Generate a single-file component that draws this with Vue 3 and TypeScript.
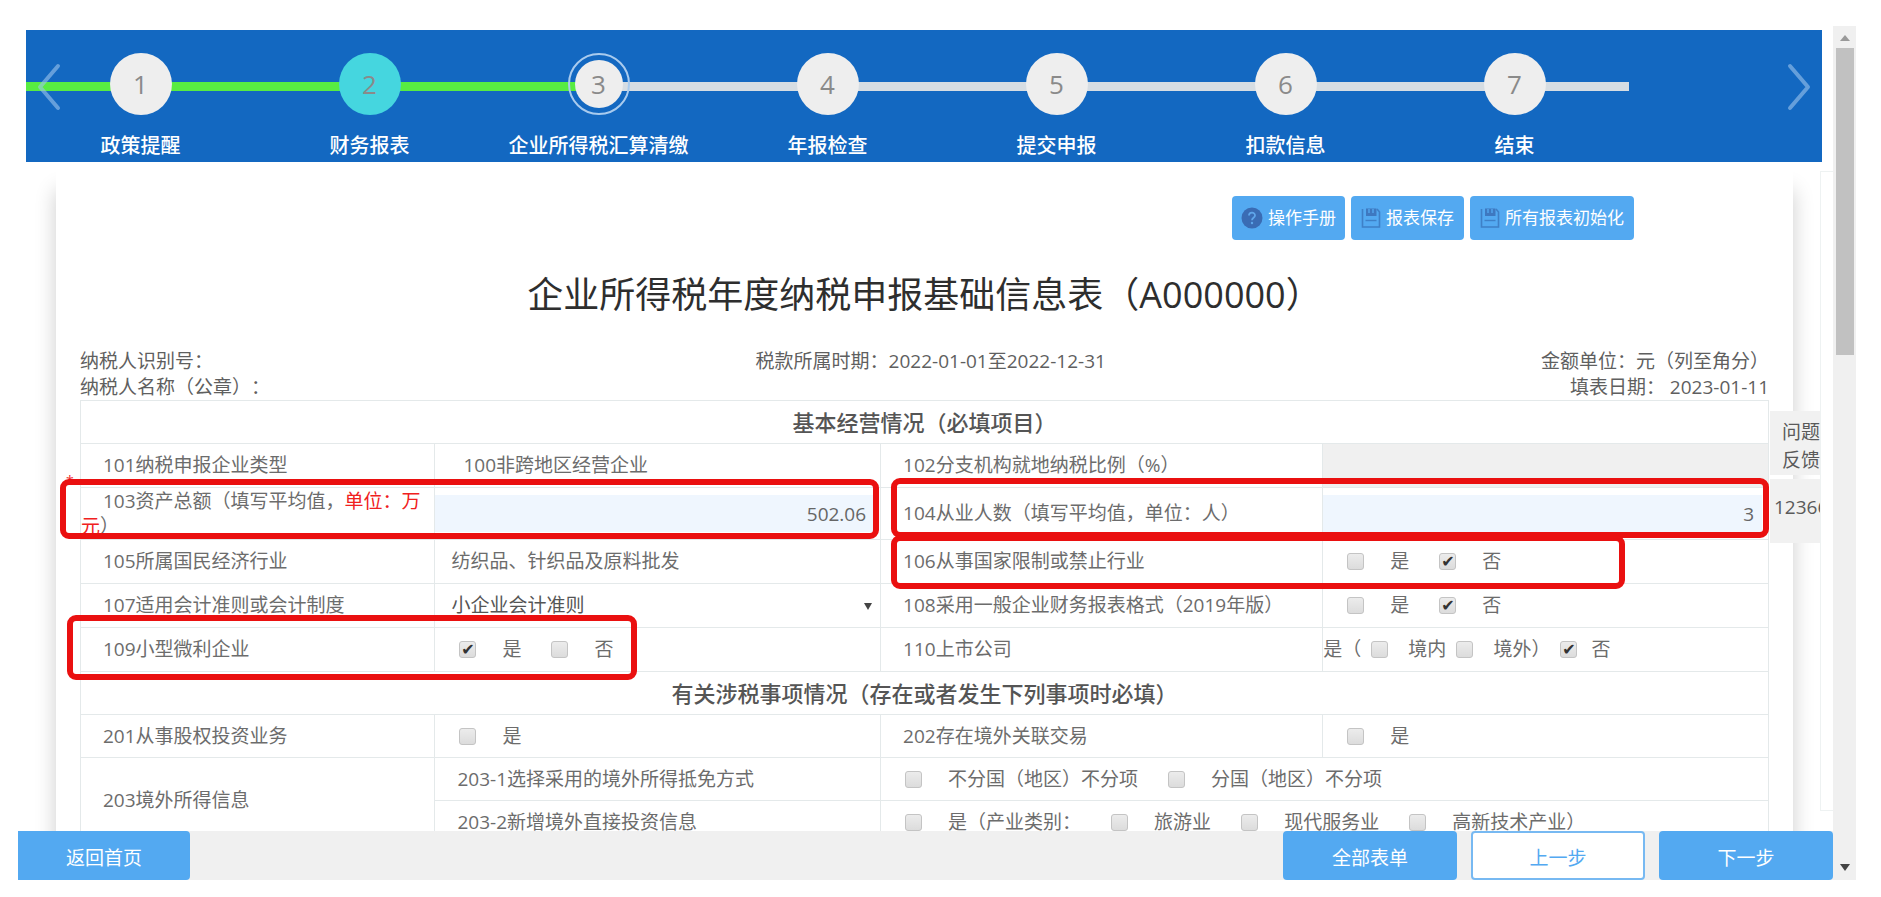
<script setup lang="ts">
import { reactive, ref } from 'vue'

interface Step {
  no: number
  label: string
  state: 'plain' | 'done' | 'current'
}

const steps: Step[] = [
  { no: 1, label: '政策提醒', state: 'plain' },
  { no: 2, label: '财务报表', state: 'done' },
  { no: 3, label: '企业所得税汇算清缴', state: 'current' },
  { no: 4, label: '年报检查', state: 'plain' },
  { no: 5, label: '提交申报', state: 'plain' },
  { no: 6, label: '扣款信息', state: 'plain' },
  { no: 7, label: '结束', state: 'plain' },
]

const assets = ref('502.06')
const staff = ref('3')
const standard = ref('小企业会计准则')

const checks = reactive({
  restrictedYes: false,
  restrictedNo: true,
  formatYes: false,
  formatNo: true,
  smallYes: true,
  smallNo: false,
  listedInner: false,
  listedOuter: false,
  listedNo: true,
  equity: false,
  related: false,
  creditAll: false,
  creditByCountry: false,
  overseas: false,
  travel: false,
  service: false,
  hitech: false,
})
</script>

<template>
  <div class="screen">
    <div class="page">
      <nav class="wizard" aria-label="申报步骤">
        <div class="track"><div class="track-done"></div></div>
        <ol class="steps">
          <li v-for="s in steps" :key="s.no" class="step">
            <span class="dot" :class="s.state"><span class="num">{{ s.no }}</span></span>
            <span class="step-label">{{ s.label }}</span>
          </li>
        </ol>
        <button class="arrow prev" type="button" aria-label="向前">
          <svg viewBox="0 0 24 48" width="24" height="48"><path d="M21 3 L3 24 L21 45" /></svg>
        </button>
        <button class="arrow next" type="button" aria-label="向后">
          <svg viewBox="0 0 24 48" width="24" height="48"><path d="M3 3 L21 24 L3 45" /></svg>
        </button>
      </nav>

      <div class="body">
        <main class="panel">
          <div class="toolbar">
            <button class="tool" type="button">
              <svg class="ico" viewBox="0 0 22 22" width="22" height="22">
                <circle cx="11" cy="11" r="10.5" fill="#3a6cb4" />
                <path d="M8 8.6 C8 4.8 14 4.8 14 8.4 C14 10.8 11 10.8 11 13.2" fill="none" stroke="#5fa6ea" stroke-width="1.8" />
                <circle cx="11" cy="16" r="1.2" fill="#5fa6ea" />
              </svg>
              操作手册
            </button>
            <button class="tool save" type="button">
              <svg class="ico" viewBox="0 0 20 20" width="20" height="20">
                <path d="M1.5 1 V19 H18.5 V4 L16 1" fill="none" stroke="#3a76bd" stroke-width="1.6" />
                <path d="M5 0.5 H15.5 V8 H5 Z" fill="#3a6cb4" />
                <path d="M8 1 V5 M12 1 V5" stroke="#53a9f1" stroke-width="1.4" />
                <path d="M4.5 12.5 H15.5" stroke="#3a76bd" stroke-width="1.4" />
              </svg>
              报表保存
            </button>
            <button class="tool save" type="button">
              <svg class="ico" viewBox="0 0 20 20" width="20" height="20">
                <path d="M1.5 1 V19 H18.5 V4 L16 1" fill="none" stroke="#3a76bd" stroke-width="1.6" />
                <path d="M5 0.5 H15.5 V8 H5 Z" fill="#3a6cb4" />
                <path d="M8 1 V5 M12 1 V5" stroke="#53a9f1" stroke-width="1.4" />
                <path d="M4.5 12.5 H15.5" stroke="#3a76bd" stroke-width="1.4" />
              </svg>
              所有报表初始化
            </button>
          </div>

          <h1 class="title">企业所得税年度纳税申报基础信息表（A000000）</h1>

          <div class="meta">
            <div>纳税人识别号：<br />纳税人名称（公章）：</div>
            <div>税款所属时期：2022-01-01至2022-12-31</div>
            <div class="meta-right">金额单位：元（列至角分）<br />填表日期： 2023-01-11</div>
          </div>

          <div class="sheet">
            <table>
              <colgroup>
                <col class="c1" />
                <col class="c2" />
                <col class="c3" />
                <col class="c4" />
              </colgroup>
              <tbody>
                <tr class="section">
                  <th colspan="4">基本经营情况（必填项目）</th>
                </tr>
                <tr>
                  <td class="name">101纳税申报企业类型</td>
                  <td class="type">100非跨地区经营企业</td>
                  <td class="name">102分支机构就地纳税比例（%）</td>
                  <td class="off"></td>
                </tr>
                <tr class="tall">
                  <td class="name">
                    <label for="assets">103资产总额（填写平均值，<em>单位：万元</em>）</label>
                  </td>
                  <td><input id="assets" v-model="assets" class="amount" type="text" /></td>
                  <td class="name"><label for="staff">104从业人数（填写平均值，单位：人）</label></td>
                  <td><input id="staff" v-model="staff" class="amount" type="text" /></td>
                </tr>
                <tr>
                  <td class="name">105所属国民经济行业</td>
                  <td class="value">纺织品、针织品及原料批发</td>
                  <td class="name">106从事国家限制或禁止行业</td>
                  <td>
                    <div class="opts">
                      <label><input v-model="checks.restrictedYes" type="checkbox" />是</label>
                      <label><input v-model="checks.restrictedNo" type="checkbox" />否</label>
                    </div>
                  </td>
                </tr>
                <tr>
                  <td class="name"><label for="standard">107适用会计准则或会计制度</label></td>
                  <td class="value">
                    <div class="pick">
                      <select id="standard" v-model="standard">
                        <option>小企业会计准则</option>
                      </select>
                    </div>
                  </td>
                  <td class="name">108采用一般企业财务报表格式（2019年版）</td>
                  <td>
                    <div class="opts">
                      <label><input v-model="checks.formatYes" type="checkbox" />是</label>
                      <label><input v-model="checks.formatNo" type="checkbox" />否</label>
                    </div>
                  </td>
                </tr>
                <tr>
                  <td class="name">109小型微利企业</td>
                  <td>
                    <div class="opts">
                      <label><input v-model="checks.smallYes" type="checkbox" />是</label>
                      <label><input v-model="checks.smallNo" type="checkbox" />否</label>
                    </div>
                  </td>
                  <td class="name">110上市公司</td>
                  <td>
                    <div class="opts listed">
                      <span>是（</span>
                      <label><input v-model="checks.listedInner" type="checkbox" />境内</label>
                      <label><input v-model="checks.listedOuter" type="checkbox" />境外）</label>
                      <label class="close"><input v-model="checks.listedNo" type="checkbox" />否</label>
                    </div>
                  </td>
                </tr>
              </tbody>
              <tbody class="related">
                <tr class="section">
                  <th colspan="4">有关涉税事项情况（存在或者发生下列事项时必填）</th>
                </tr>
                <tr>
                  <td class="name">201从事股权投资业务</td>
                  <td>
                    <div class="opts">
                      <label><input v-model="checks.equity" type="checkbox" />是</label>
                    </div>
                  </td>
                  <td class="name">202存在境外关联交易</td>
                  <td>
                    <div class="opts">
                      <label><input v-model="checks.related" type="checkbox" />是</label>
                    </div>
                  </td>
                </tr>
                <tr>
                  <td class="name" rowspan="2">203境外所得信息</td>
                  <td class="name">203-1选择采用的境外所得抵免方式</td>
                  <td colspan="2">
                    <div class="opts">
                      <label><input v-model="checks.creditAll" type="checkbox" />不分国（地区）不分项</label>
                      <label><input v-model="checks.creditByCountry" type="checkbox" />分国（地区）不分项</label>
                    </div>
                  </td>
                </tr>
                <tr>
                  <td class="name">203-2新增境外直接投资信息</td>
                  <td colspan="2">
                    <div class="opts">
                      <label><input v-model="checks.overseas" type="checkbox" />是（产业类别：</label>
                      <label><input v-model="checks.travel" type="checkbox" />旅游业</label>
                      <label><input v-model="checks.service" type="checkbox" />现代服务业</label>
                      <label><input v-model="checks.hitech" type="checkbox" />高新技术产业）</label>
                    </div>
                  </td>
                </tr>
              </tbody>
            </table>
            <span class="star">*</span>
            <div class="mark mark-assets"></div>
            <div class="mark mark-staff"></div>
            <div class="mark mark-restricted"></div>
            <div class="mark mark-small"></div>
          </div>
        </main>

        <aside class="strip"></aside>
        <div class="tabs">
          <a href="#feedback" class="tab feedback">问题<br />反馈</a>
          <a href="#hotline" class="tab hotline">12366</a>
        </div>
      </div>

      <footer class="footer">
        <button class="btn home" type="button">返回首页</button>
        <button class="btn" type="button">全部表单</button>
        <button class="btn ghost" type="button">上一步</button>
        <button class="btn" type="button">下一步</button>
      </footer>
    </div>

    <div class="scroll" aria-hidden="true">
      <svg class="tri" viewBox="0 0 10 6" width="10" height="6"><path d="M5 0 L10 6 H0 Z" fill="#999" /></svg>
      <div class="thumb"></div>
      <svg class="tri bottom" viewBox="0 0 10 7" width="10" height="7"><path d="M0 0 H10 L5 7 Z" fill="#444" /></svg>
    </div>
  </div>
</template>

<style>
body {
  margin: 0;
  background: #fff;
}
</style>

<style scoped>
.screen {
  box-sizing: border-box;
  display: flex;
  height: 100vh;
  padding: 26px 25px 17px 18px;
  overflow: hidden;
  color: #5f5f5f;
  font-family: "Open Sans", "Noto Sans CJK SC", sans-serif;
  font-size: 19px;
  line-height: 26px;
  text-spacing-trim: space-all;
}

button,
input,
select {
  font: inherit;
}

.page {
  flex: 1;
  min-width: 0;
  display: flex;
  flex-direction: column;
}

/* wizard */
.wizard {
  position: relative;
  flex: none;
  height: 132px;
  margin: 4px 11px 0 8px;
  background: #1368c1;
}

.track {
  position: absolute;
  left: 0;
  right: 193px;
  top: 52px;
  height: 9px;
  background: #d6dde3;
}

.track-done {
  width: 35%;
  height: 100%;
  background: #58ec42;
}

.steps {
  position: relative;
  display: flex;
  margin: 0 193px 0 0;
  padding: 23px 0 0;
  list-style: none;
}

.step {
  flex: 1;
  display: flex;
  flex-direction: column;
  align-items: center;
  white-space: nowrap;
}

.dot {
  box-sizing: border-box;
  display: flex;
  width: 62px;
  height: 62px;
  border-radius: 50%;
  background: #eeeeee;
}

.dot.done {
  background: #45d6df;
}

.dot.current {
  padding: 5px;
  border: 2px solid #a9cbee;
  background: none;
}

.num {
  flex: 1;
  display: flex;
  align-items: center;
  justify-content: center;
  border-radius: 50%;
  color: #8a8a8a;
  font-size: 26px;
}

.dot.current .num {
  background: #eeeeee;
}

.step-label {
  margin-top: 17px;
  color: #fff;
  font-size: 20px;
  font-weight: 500;
  line-height: 28px;
}

.arrow {
  position: absolute;
  top: 33px;
  padding: 0;
  border: 0;
  background: none;
  line-height: 0;
}

.arrow path {
  fill: none;
  stroke: #9cc4ec;
  stroke-opacity: 0.6;
  stroke-width: 4;
  stroke-linecap: round;
  stroke-linejoin: round;
}

.prev {
  left: 11px;
}

.next {
  right: 11px;
}

/* form */
.body {
  position: relative;
  flex: 1;
  min-height: 0;
  display: flex;
  overflow: hidden;
}

.panel {
  flex: 1;
  min-width: 0;
  height: 760px;
  margin: 0 27px 0 38px;
  padding: 0 24px;
  box-sizing: border-box;
  background: #fff;
  box-shadow: 0 28px 20px rgba(0, 0, 0, 0.2);
}

.toolbar {
  display: flex;
  justify-content: flex-end;
  gap: 6px;
  padding: 34px 135px 0 0;
}

.tool {
  display: flex;
  align-items: center;
  gap: 5px;
  height: 44px;
  padding: 0 9px;
  border: 0;
  border-radius: 4px;
  background: #53a9f1;
  color: #fff;
  font-size: 17px;
  white-space: nowrap;
}

.tool.save {
  padding: 0 10px;
}

.save .ico {
  opacity: 0.8;
}

.title {
  margin: 30px 0 28px;
  color: #2e2e2e;
  font-size: 36px;
  font-weight: 400;
  line-height: 50px;
  text-align: center;
}

.meta {
  display: grid;
  grid-template-columns: 40% auto 1fr;
}

.meta-right {
  text-align: right;
}

.sheet {
  position: relative;
}

table {
  width: 100%;
  border-collapse: collapse;
  table-layout: fixed;
  color: #6c6c6c;
}

.c1 {
  width: 21%;
}

.c2 {
  width: 26.4%;
}

.c3 {
  width: 26.2%;
}

tr {
  height: 44px;
}

tr.section,
.related tr {
  height: 43px;
}

tr.tall {
  height: 52px;
}

th,
td {
  padding: 0;
  border: 1px solid #e4e9ea;
  line-height: 25px;
  text-align: left;
}

th {
  color: #555;
  font-size: 22px;
  font-weight: 500;
  text-align: center;
}

.name {
  text-indent: 22px;
}

.name label {
  display: block;
}

.name em {
  color: #f02020;
  font-style: normal;
}

.type {
  padding-left: 28px;
}

.value {
  padding-left: 16px;
}

.off {
  background: #f0f0f0;
}

.amount {
  display: block;
  box-sizing: border-box;
  width: calc(100% - 6px);
  height: 37px;
  padding: 0 8px;
  border: 0;
  background: #eff6fe;
  color: #666;
  text-align: right;
}

.pick {
  position: relative;
}

.pick select {
  width: 100%;
  height: 30px;
  padding: 0;
  border: 0;
  appearance: none;
  background: none;
  color: #555;
}

.pick::after {
  content: "";
  position: absolute;
  right: 8px;
  top: 12px;
  border: 4px solid transparent;
  border-top: 7px solid #444;
  border-bottom: 0;
}

.opts {
  display: flex;
  gap: 30px;
  padding-left: 24px;
  white-space: nowrap;
}

.opts label {
  display: flex;
  align-items: center;
  gap: 26px;
}

.opts.listed {
  gap: 10px;
  padding-left: 0;
}

.opts.listed label {
  gap: 20px;
}

.opts.listed .close {
  gap: 14px;
}

input[type="checkbox"] {
  appearance: none;
  box-sizing: border-box;
  display: flex;
  align-items: center;
  justify-content: center;
  width: 17px;
  height: 17px;
  margin: 0;
  border: 1px solid #c4c4c4;
  border-radius: 3px;
  background: linear-gradient(#ececec, #dcdcdc);
}

input[type="checkbox"]:checked::before {
  content: "✔";
  color: #333;
  font-family: "DejaVu Sans", sans-serif;
  font-size: 16px;
  line-height: 16px;
}

/* highlight frames drawn over the table */
.mark {
  position: absolute;
  box-sizing: border-box;
  border: 6px solid #ea1010;
  border-radius: 9px;
  pointer-events: none;
}

.mark-assets {
  left: -20px;
  right: 52.7%;
  top: 79px;
  height: 60px;
}

.mark-staff {
  left: 48%;
  right: 0;
  top: 78px;
  height: 60px;
}

.mark-restricted {
  left: 48%;
  right: 8.5%;
  top: 135px;
  height: 54px;
}

.mark-small {
  left: -13px;
  right: 67%;
  top: 215px;
  height: 65px;
}

.star {
  position: absolute;
  left: -14px;
  top: 68px;
  color: #f03030;
  font-size: 14px;
}

.strip {
  flex: none;
  width: 12px;
  height: 638px;
  margin-top: 9px;
  border: 1px solid #eef2f2;
  border-right: 0;
}

.tabs {
  position: absolute;
  top: 249px;
  right: 13px;
  width: 50px;
  display: flex;
  flex-direction: column;
  gap: 4px;
}

.tab {
  box-sizing: border-box;
  height: 64px;
  overflow: hidden;
  background: #f1f1f1;
  color: #5a5a5a;
  line-height: 28px;
  text-decoration: none;
  white-space: nowrap;
}

.feedback {
  padding: 7px 0 0 12px;
}

.hotline {
  padding: 14px 0 0 4px;
}

/* footer */
.footer {
  flex: none;
  display: flex;
  gap: 14px;
  height: 49px;
  background: #f0f0f0;
}

.btn {
  width: 174px;
  padding: 4px 0 0;
  border: 0;
  border-radius: 4px;
  background: #53a9f1;
  color: #fff;
  text-align: center;
}

.btn.home {
  width: 172px;
  margin-right: auto;
  border-radius: 0 4px 4px 0;
}

.btn.ghost {
  border: 2px solid #77b9f2;
  background: #fff;
  color: #53a9f1;
}

/* scrollbar */
.scroll {
  flex: none;
  display: flex;
  flex-direction: column;
  align-items: center;
  width: 23px;
  background: #f0f0f0;
}

.tri {
  margin: 9px 0 7px;
}

.thumb {
  width: 18px;
  height: 36%;
  background: #c1c1c1;
}

.tri.bottom {
  margin: auto 0 9px;
}
</style>
